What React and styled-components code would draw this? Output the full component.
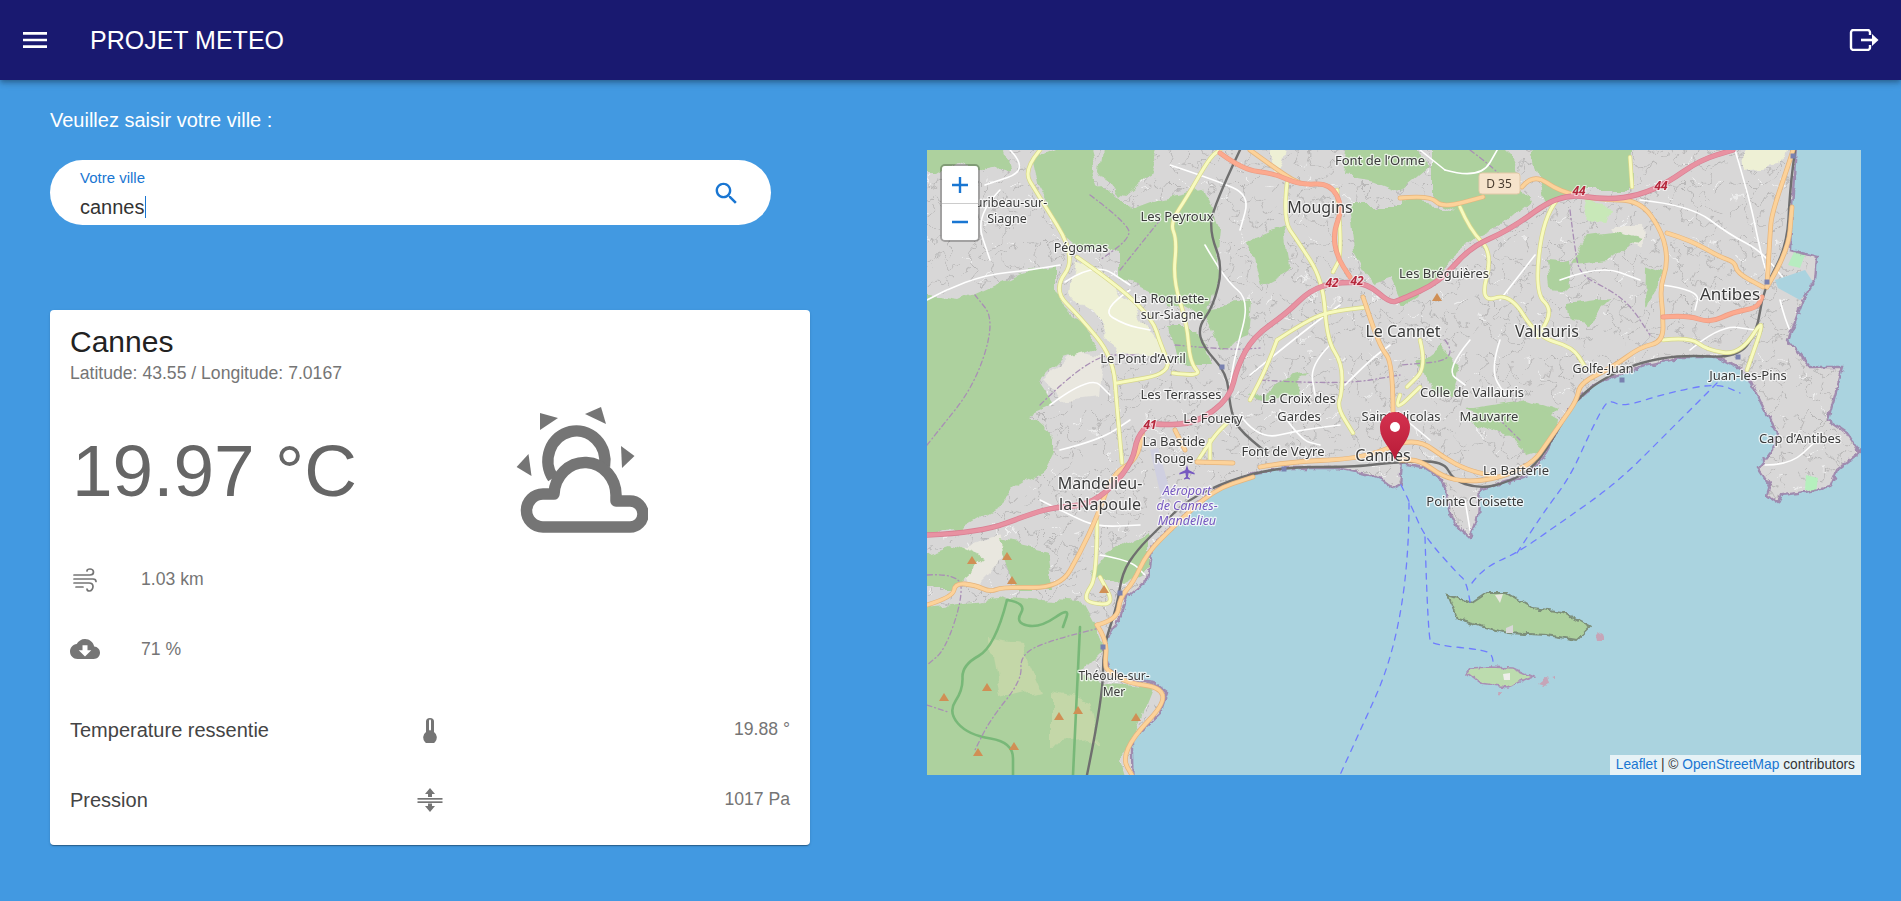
import React from 'react';
import styled, { createGlobalStyle } from 'styled-components';

const GlobalStyle = createGlobalStyle`
  html, body {
    margin: 0;
    padding: 0;
    background: #4299e1;
    font-family: "Liberation Sans", Arial, sans-serif;
    overflow: hidden;
  }
`;

const Page = styled.div`
  min-height: 901px;
  background: #4299e1;
`;

const Header = styled.header`
  height: 80px;
  background: #191970;
  color: #fff;
  display: flex;
  align-items: center;
  padding: 0 22px 0 19px;
  box-shadow: 0 2px 4px -1px rgba(0,0,0,.2), 0 4px 5px 0 rgba(0,0,0,.14), 0 1px 10px 0 rgba(0,0,0,.12);
`;

const Title = styled.h1`
  margin: 0 auto 0 39px;
  font-size: 25px;
  font-weight: 400;
`;

const Content = styled.main`
  display: flex;
  align-items: flex-start;
  padding-left: 50px;
`;

const LeftColumn = styled.section`
  width: 760px;
  flex: none;
`;

const Prompt = styled.p`
  margin: 25px 0 25px;
  color: #fff;
  font-size: 20px;
  line-height: 30px;
`;

const SearchBar = styled.div`
  width: 721px;
  height: 65px;
  box-sizing: border-box;
  background: #fff;
  border-radius: 33px;
  padding: 0 30px 0 30px;
  display: flex;
  align-items: center;
  justify-content: space-between;
`;

const Field = styled.div`
  display: flex;
  flex-direction: column;
  padding-top: 2px;
`;

const FieldLabel = styled.span`
  color: #1976d2;
  font-size: 15px;
  line-height: 18px;
  margin-bottom: 9px;
`;

const FieldValue = styled.span`
  align-self: flex-start;
  color: #333;
  font-size: 20px;
  line-height: 22px;
  border-right: 1px solid #1976d2;
`;

const Card = styled.article`
  margin-top: 85px;
  height: 535px;
  box-sizing: border-box;
  padding: 14px 20px 10px;
  background: #fff;
  border-radius: 4px;
  box-shadow: 0 2px 1px -1px rgba(0,0,0,.2), 0 1px 1px 0 rgba(0,0,0,.14), 0 1px 3px 0 rgba(0,0,0,.12);
`;

const CityName = styled.h2`
  margin: 0;
  color: #222;
  font-size: 30px;
  font-weight: 400;
  line-height: 36px;
`;

const Coords = styled.p`
  margin: 1px 0 20px;
  color: #757575;
  font-size: 17.6px;
  line-height: 24px;
`;

const TempRow = styled.div`
  height: 130px;
  display: grid;
  grid-template-columns: 446px 1fr;
  align-items: center;
  margin-bottom: 9px;
`;

const Temp = styled.span`
  color: #666;
  font-size: 73px;
  padding-left: 2px;
`;

const MiniRow = styled.div`
  height: 70px;
  display: flex;
  align-items: center;
`;

const MiniIcon = styled.div`
  width: 71px;
  display: flex;
  align-items: center;
`;

const SmallValue = styled.span`
  color: #757575;
  font-size: 17.6px;
`;

const Details = styled.div`
  margin-top: 11px;
`;

const DetailRow = styled.div`
  height: 70px;
  display: grid;
  grid-template-columns: 1fr 1fr 1fr;
  align-items: center;
`;

const DetailLabel = styled.span`
  color: #444;
  font-size: 20px;
`;

const DetailIcon = styled.div`
  display: flex;
  justify-content: center;
`;

const DetailValue = styled(SmallValue)`
  text-align: right;
  padding-bottom: 2px;
`;

const SearchGlyph = styled.svg`
  margin-top: 2px;
`;

const WindGlyph = styled.svg`
  margin-left: 3px;
`;

const MapBox = styled.div`
  position: relative;
  width: 934px;
  height: 625px;
  margin: 70px 0 0 117px;
  flex: none;
  overflow: hidden;
  background: #aad3df;
`;

const MapArt = styled.svg`
  display: block;
  filter: blur(0.45px);
`;

const ZoomControl = styled.div`
  position: absolute;
  top: 14px;
  left: 13px;
  width: 36px;
  border: 2px solid rgba(0,0,0,.25);
  border-radius: 5px;
  background-clip: padding-box;
  overflow: hidden;
`;

const ZoomButton = styled.div`
  height: 37px;
  box-sizing: border-box;
  display: flex;
  align-items: center;
  justify-content: center;
  background: #fff;
  & + & {
    border-top: 1px solid #ccc;
  }
`;

const Attribution = styled.div`
  position: absolute;
  right: 0;
  bottom: 0;
  height: 20px;
  padding: 0 6px 0 6px;
  background: rgba(255,255,255,.7);
  color: #333;
  font-size: 13.75px;
  line-height: 20px;
`;

const AttributionLink = styled.a`
  color: #1976d2;
`;

const MapLabel = styled.text`
  font-family: "Noto Sans", sans-serif;
  fill: ${(p) => (p.$air ? '#7658c0' : '#3a3a3a')};
  font-style: ${(p) => (p.$air ? 'italic' : 'normal')};
  text-anchor: middle;
  paint-order: stroke;
  stroke: rgba(255,255,255,.75);
  stroke-width: 2.4px;
  stroke-linejoin: round;
`;

const RoadNumber = styled.text`
  font-family: "Noto Sans", sans-serif;
  font-size: 12px;
  font-style: italic;
  font-weight: 700;
  fill: #b5283c;
  text-anchor: middle;
  paint-order: stroke;
  stroke: rgba(255,255,255,.6);
  stroke-width: 2px;
`;

const Shield = styled.text`
  font-family: "Noto Sans", sans-serif;
  font-size: 12px;
  fill: #4a3d30;
  text-anchor: middle;
`;

const forests = [
  '905,292 960,300 1020,273 1053,268 1053,290 1080,317 1097,347 1063,357 1037,383 1053,407 1030,417 1053,437 1053,453 1043,473 1020,487 1000,507 960,530 905,533',
  '1030,160 1087,135 1100,183 1127,207 1133,240 1113,250 1080,247 1060,230 1037,190',
  '905,135 1000,135 1010,165 985,170 960,160 935,175 905,175',
  '1120,215 1160,200 1205,190 1220,230 1215,280 1205,320 1150,290 1120,280',
  '1105,135 1160,135 1145,180 1120,200 1100,170',
  '1205,307 1250,300 1247,340 1220,350',
  '1170,330 1198,330 1210,365 1180,365',
  '1250,240 1285,225 1290,270 1262,285',
  '1350,135 1400,135 1430,165 1400,190 1375,180 1345,175',
  '1350,205 1420,205 1415,270 1375,285 1355,250',
  '1433,135 1500,135 1530,200 1500,227 1473,240 1457,207 1433,197',
  '1400,200 1460,207 1480,235 1450,260 1420,297 1400,303 1385,270 1400,240',
  '1530,135 1633,135 1630,190 1570,190 1545,205',
  '1547,260 1568,262 1570,287 1550,285',
  '1590,235 1613,232 1640,240 1612,262 1570,265',
  '1643,267 1665,275 1650,297 1642,310',
  '1567,303 1613,297 1587,323 1570,320',
  '1465,410 1530,400 1560,410 1530,440 1500,430',
  '1463,420 1500,433 1527,457 1540,453 1560,423 1530,405',
  '1250,400 1285,380 1310,375 1290,395',
  '1420,360 1440,345 1460,365 1450,395 1430,395',
  '905,610 1007,597 1080,603 1093,627 1100,653 1080,673 1110,683 1153,687 1133,737 1123,760 1133,795 905,795',
  '905,560 950,545 985,560 950,590 905,590',
  '1000,540 1045,550 1050,590 1020,590',
  '1130,540 1150,530 1150,570 1120,585 1085,575 1105,555',
];

const palePatches = [
  { fill: '#eef0d5', pts: '1075,260 1115,285 1160,340 1165,352 1120,355 1095,320 1070,290' },
  { fill: '#e9e7df', pts: '1043,380 1075,350 1105,355 1100,395 1060,400' },
  { fill: '#e9e7df', pts: '945,555 1000,535 1010,550 975,585 950,575' },
  { fill: '#e9e7df', pts: '1610,225 1640,225 1642,245 1618,250' },
  { fill: '#eef0d5', pts: '1740,135 1790,135 1780,165 1745,170' },
  { fill: '#eef0d5', pts: '1265,135 1290,135 1275,180' },
  { fill: '#c8e8b8', pts: '1590,200 1610,205 1605,220 1585,218' },
];

const parkPatches = [
  { fill: '#c4d7a8', pts: '990,640 1020,645 1040,690 1000,700' },
  { fill: '#c4d7a8', pts: '1050,690 1090,700 1100,740 1050,745' },
];

const shorePatches = [
  { fill: '#b7ecc0', pts: '1795,250 1805,255 1800,268 1788,265' },
  { fill: '#aad3df', pts: '1775,280 1805,270 1815,285 1800,300 1778,288' },
  { fill: '#b5f0bd', pts: '1806,475 1818,478 1816,492 1805,490' },
];

const parkLines = [
  '1007,600 995,647 962,665 963,690 948,712 968,735 1013,742 1013,775',
  '1007,600 1027,603 1015,623 1040,628 1070,607 1063,627',
  '1080,627 1073,775',
];

const adminLines = [
  '927,575 960,573 962,600 945,650 927,665',
  '1100,628 1050,640 1020,655 1022,680 990,720 975,750',
  '927,705 948,712',
  '927,445 935,435 975,385 995,320 975,295',
  '1040,405 1090,355 1135,355',
  '1175,345 1230,350 1260,348',
  '1260,380 1340,385 1400,375',
  '1470,150 1490,165 1505,180',
  '1570,210 1575,250 1580,275 1610,290 1630,305 1650,335',
  '1445,340 1460,360 1400,365',
  '1120,270 1160,220',
  '1090,195 1130,225 1128,240 1100,260',
  '1500,420 1520,440',
];

const streets = [
  '927,300 945,290 985,275 1030,270 1060,265',
  '1010,150 1030,170 985,185',
  '1065,282 1095,262 1130,285',
  '1130,290 1100,310 1125,325 1150,330',
  '1170,165 1215,180 1250,195 1240,230',
  '1205,245 1225,280 1250,300 1235,355 1230,385',
  '1250,375 1305,330 1340,305',
  '1345,385 1370,360 1390,345',
  '1240,415 1258,440 1300,430 1340,425',
  '1060,450 1100,440 1130,420',
  '1040,500 1070,515 1097,527 1140,525',
  '1100,555 1130,560 1145,575',
  '1640,200 1690,205 1730,235 1760,250 1785,280',
  '1735,150 1750,200 1760,250 1770,285',
  '1662,285 1700,290 1695,310',
  '1780,300 1790,340 1815,355',
  '1765,465 1790,465 1815,442',
  '1500,340 1490,370 1505,395',
  '1445,170 1480,180 1500,145',
  '1535,255 1500,300',
  '1420,150 1445,170',
  '1465,500 1470,530',
  '1400,415 1430,440',
  '1050,405 1090,375 1110,395',
  '1330,345 1310,365 1315,395',
  '1470,340 1445,370 1465,385',
  '1560,280 1600,265 1640,280',
  '1690,350 1720,325 1755,330',
  '1000,190 975,215 990,260',
  '1280,410 1300,440 1320,445',
];

const orangeRoads = [
  '1250,150 1287,177 1300,183',
  '1400,198 1430,195 1442,208 1483,197',
  '1522,187 1533,173 1560,192 1600,200 1640,200 1663,233 1668,263 1660,287 1663,313 1663,342 1640,347 1613,367 1580,383 1577,400 1563,420 1547,443 1533,463 1500,478 1467,482 1443,477 1420,460 1400,460',
  '1260,467 1287,462 1353,459 1385,450 1400,442 1423,442 1443,457 1467,470 1497,477',
  '1393,413 1393,363 1380,347 1363,297',
  '1667,233 1690,240 1720,257 1735,262 1737,273 1763,287',
  '1767,287 1770,233 1772,213 1790,160 1793,150',
  '1767,287 1788,253 1792,207',
  '927,605 953,597 955,583 975,585 990,592 1003,587 1060,588 1080,553 1097,517 1113,473 1137,460 1143,430',
  '1097,625 1117,620 1120,597 1133,583 1147,553 1173,527 1213,490 1253,477',
  '1097,625 1107,640 1105,665 1107,670 1127,683 1160,687 1165,703 1133,737 1123,760 1132,775',
  '1197,462 1233,463',
  '1175,430 1185,450',
];

const salmonRoads = [
  '1220,153 1243,170 1273,173 1300,185 1330,183 1343,207 1333,233 1337,257 1350,277',
  '1663,317 1687,315 1710,323 1733,312 1757,308 1762,297',
];

const motorway = [
  '927,535 980,533 1033,513 1057,507 1087,505 1113,487 1133,460 1137,437 1150,423 1163,425 1197,423 1230,398 1237,367 1253,337 1287,313 1310,290 1337,282 1367,283 1390,303 1400,300 1440,282 1470,247 1510,230 1560,193 1607,200 1640,195 1667,183 1700,160 1733,150',
];

const yellowRoads = [
  '1040,150 1023,170 1037,193 1077,257 1053,290 1080,317 1113,357 1117,407 1122,463',
  '1077,257 1120,287 1153,320 1160,343 1173,373 1117,383',
  '1173,373 1203,377 1190,363 1187,323 1173,280 1177,240 1170,223 1187,197 1210,157 1220,150',
  '1287,183 1283,220 1297,240 1323,280 1327,340 1342,363 1342,393 1337,407 1353,433',
  '1337,190 1343,253 1333,272',
  '1277,340 1267,367 1250,400',
  '1277,340 1303,323 1327,312 1367,307',
  '1460,207 1470,230 1493,253 1480,303 1510,293 1537,337 1573,347 1585,367',
  '1557,200 1543,217 1535,293 1553,310 1538,337',
  '1630,157 1632,187',
  '1663,340 1690,337 1707,350 1740,355 1767,313 1747,370',
  '1420,340 1427,367 1407,387',
  '1097,520 1097,577 1085,595 1088,603 1115,605 1100,577',
  '1210,440 1210,460',
  '1197,462 1213,437 1227,423',
  '1400,395 1393,413 1420,387',
];

const rails = [
  '1087,775 1103,697 1103,647 1117,607 1122,573 1137,550 1160,527 1187,500 1230,480 1280,467 1353,467 1387,463 1443,460 1453,480 1477,488 1500,485 1533,470 1560,427 1573,403 1600,380 1640,362 1683,355 1737,358 1757,333 1763,290 1787,247 1790,190 1795,150',
  '1240,150 1213,207 1210,233 1223,267 1213,307 1198,327 1203,347 1227,373 1230,407 1237,428 1267,453',
];

const ferries = [
  '1472,583 1483,568 1517,553 1553,528 1617,483 1667,433 1717,383',
  '1517,553 1543,513 1570,477 1588,437 1603,407 1610,400 1623,407 1667,393 1717,383 1740,393',
  '1470,602 1467,582 1457,573 1425,537 1413,510 1407,497 1400,483',
  '1425,537 1428,637 1433,645 1487,650 1493,657 1493,667',
  '1409,503 1409,623 1340,775',
];

const peaks = [
  [972, 560], [1007, 556], [1012, 580], [1104, 589], [987, 687], [944, 697],
  [1059, 716], [1078, 710], [1136, 717], [1014, 746], [978, 752], [1437, 297],
];

const stations = [[1120, 593], [1103, 647], [1284, 469], [1622, 380], [1738, 357], [1767, 282], [1793, 156], [1222, 367]];

const labels = [
  ['Font de l\u2019Orme', 1380, 165, 13],
  ['Auribeau-sur-', 1007, 207, 12.5],
  ['Siagne', 1007, 223, 12.5],
  ['Les Peyroux', 1177, 221, 13],
  ['Mougins', 1320, 213, 16],
  ['Pégomas', 1081, 252, 12.5],
  ['Les Bréguières', 1444, 278, 13],
  ['La Roquette-', 1171, 303, 12.5],
  ['sur-Siagne', 1172, 319, 12.5],
  ['Le Cannet', 1403, 337, 16],
  ['Vallauris', 1547, 337, 16],
  ['Antibes', 1730, 300, 17],
  ['Le Pont d\u2019Avril', 1143, 363, 13],
  ['Les Terrasses', 1181, 399, 13],
  ['La Croix des', 1299, 403, 13],
  ['Gardes', 1299, 421, 13],
  ['Le Fouery', 1213, 423, 13],
  ['Saint-Nicolas', 1401, 421, 13],
  ['Colle de Vallauris', 1472, 397, 13],
  ['Mauvarre', 1489, 421, 13],
  ['Golfe-Juan', 1603, 373, 12.5],
  ['Juan-les-Pins', 1748, 380, 13],
  ['Cap d\u2019Antibes', 1800, 443, 13],
  ['La Bastide', 1174, 446, 13],
  ['Rouge', 1174, 463, 13],
  ['Font de Veyre', 1283, 456, 13],
  ['Cannes', 1383, 461, 16],
  ['La Batterie', 1516, 475, 13],
  ['Pointe Croisette', 1475, 506, 13],
  ['Mandelieu-', 1100, 489, 16],
  ['la-Napoule', 1100, 510, 16],
  ['Théoule-sur-', 1114, 680, 12],
  ['Mer', 1114, 696, 12],
];

const airportLabels = [
  ['Aéroport', 1187, 495],
  ['de Cannes-', 1187, 510],
  ['Mandelieu', 1187, 525],
];

const roadNumbers = [
  ['42', 1332, 287], ['42', 1357, 285], ['41', 1150, 429], ['44', 1579, 195], ['44', 1661, 190],
];

const seaPath = 'M1133 800 L1132 752 1132 740 1160 713 1167 693 1153 683 1127 680 1110 670 1103 650 1110 633 1120 617 1127 597 1147 580 1150 560 1153 543 1173 527 1197 503 1220 487 1253 473 1287 468 1337 468 1370 475 1383 480 1393 488 1400 485 1402 463 1423 467 1443 480 1450 513 1457 527 1470 538 1478 517 1480 490 1503 483 1523 477 1540 463 1553 440 1563 420 1573 403 1597 383 1640 367 1683 357 1717 357 1747 373 1763 407 1777 433 1773 450 1758 468 1770 485 1767 495 1778 503 1782 495 1805 492 1830 487 1837 470 1860 452 1847 433 1828 420 1843 367 1810 367 1788 340 1803 300 1815 280 1817 257 1790 250 1792 207 1797 130 1885 130 1885 800 Z';

// rounds the corners of a road: each inner point becomes a curve control
const smooth = (pts) => {
  const p = pts.split(' ').map((s) => s.split(',').map(Number));
  let d = `M${p[0][0]} ${p[0][1]}`;
  for (let i = 1; i < p.length - 1; i += 1) {
    const mx = (p[i][0] + p[i + 1][0]) / 2;
    const my = (p[i][1] + p[i + 1][1]) / 2;
    d += ` Q${p[i][0]} ${p[i][1]} ${mx} ${my}`;
  }
  const last = p[p.length - 1];
  return `${d} L${last[0]} ${last[1]}`;
};

const Rough = ({ id, freq, scale, seed }) => (
  <filter id={id} filterUnits="userSpaceOnUse" x="900" y="125" width="990" height="680" colorInterpolationFilters="sRGB">
    <feTurbulence type="fractalNoise" baseFrequency={freq} numOctaves="3" seed={seed} />
    <feDisplacementMap in="SourceGraphic" scale={scale} xChannelSelector="R" yChannelSelector="G" />
  </filter>
);

// texture of small streets in the built-up areas
const Texture = () => (
  <pattern id="urban" width="64" height="58" patternUnits="userSpaceOnUse">
    <path
      d="M2 8 l10 6 6 -7 9 9 -5 9 11 5 7 -9 10 4 M14 14 l-4 14 9 7 -3 12 11 8 M27 16 l13 -8 8 -6 M35 34 l-4 13 12 6 9 -8 9 3 M45 26 l6 12 10 -5 M2 40 l9 -5 M52 45 l-3 12 M60 8 l-6 13"
      fill="none"
      stroke="#b9b8b8"
      strokeWidth="1"
    />
    <path d="M4 24 l8 4 M30 4 l6 8 M20 50 l9 -6 M50 12 l8 -2" fill="none" stroke="#f4f4f4" strokeWidth="0.9" />
  </pattern>
);

const Lines = ({ items, color, width, dash, opacity }) =>
  items.map((pts) => (
    <path
      key={pts}
      d={smooth(pts)}
      fill="none"
      stroke={color}
      strokeWidth={width}
      strokeDasharray={dash}
      strokeOpacity={opacity}
      strokeLinejoin="round"
      strokeLinecap="round"
    />
  ));

function OsmMap() {
  return (
    <MapArt width="934" height="625" viewBox="927 150 934 625">
      <defs>
        <Texture />
        <Rough id="areas" freq="0.035" scale="18" seed="4" />
        <Rough id="shore" freq="0.13" scale="6" seed="9" />
        <Rough id="tiny" freq="0.06" scale="22" seed="2" />
        <linearGradient id="pin" x1="0" y1="0" x2="0" y2="1">
          <stop offset="0" stopColor="#d4324f" />
          <stop offset="1" stopColor="#b81c38" />
        </linearGradient>
      </defs>
      <rect x="927" y="150" width="934" height="625" fill="#d8d7d7" />
      <rect x="900" y="125" width="990" height="680" fill="url(#urban)" filter="url(#tiny)" />
      <g filter="url(#areas)">
        {palePatches.map((p) => (
          <polygon key={p.pts} points={p.pts} fill={p.fill} />
        ))}
        {forests.map((pts) => (
          <polygon key={pts} points={pts} fill="#add19e" />
        ))}
        {parkPatches.map((p) => (
          <polygon key={p.pts} points={p.pts} fill={p.fill} />
        ))}
      </g>
      <polygon points="1150,450 1158,448 1172,498 1162,500" fill="#cfcfe0" />
      <polygon points="1213,490 1253,473 1258,476 1225,490" fill="#e6d9e2" />
      <Lines items={parkLines} color="#78b878" width={2.6} />
      <Lines items={adminLines} color="#a98fb5" width={1.3} dash="5 3 1 3" />
      <Lines items={streets} color="#ffffff" width={1.6} />
      {shorePatches.map((p) => (
        <polygon key={p.pts} points={p.pts} fill={p.fill} />
      ))}
      <g filter="url(#shore)">
        <path d={seaPath} fill="#aad3df" stroke="#9a7fa8" strokeWidth="2.4" strokeOpacity=".85" />
        <polygon points="1448,595 1458,620 1507,633 1547,635 1577,640 1590,627 1563,612 1533,608 1507,593 1487,593 1472,603" fill="#add19e" stroke="#7d8f7a" strokeWidth="2" />
        <polygon points="1467,673 1480,683 1507,687 1533,677 1513,668 1490,667 1470,668" fill="#bcdcae" stroke="#a98fb5" strokeWidth="1.6" />
        <polygon points="1596,631 1602,635 1604,641 1598,641" fill="#c6a5b8" />
        <polygon points="1538,684 1548,676 1550,684 1544,686" fill="#c6a5b8" />
        <polygon points="1552,677 1556,676 1556,679" fill="#c6a5b8" />
        <polygon points="1498,692 1502,692 1500,696" fill="#c6a5b8" />
      </g>
      <polygon points="1495,595 1503,594 1500,603" fill="#e9e7df" />
      <polygon points="1506,628 1513,625 1513,633 1506,633" fill="#d8d7d7" />
      <polygon points="1503,674 1510,673 1510,680 1504,680" fill="#eeeeea" />
      <Lines items={ferries} color="#6f7cff" width={1.3} dash="6 6" />
      <Lines items={rails} color="#6f6f6f" width={2.4} />
      <Lines items={yellowRoads} color="#d7d78a" width={4.4} />
      <Lines items={yellowRoads} color="#f7fabf" width={3} />
      <Lines items={orangeRoads} color="#e5b47c" width={4.8} />
      <Lines items={orangeRoads} color="#fcd29a" width={3.4} />
      <Lines items={salmonRoads} color="#ec9c84" width={5} />
      <Lines items={salmonRoads} color="#fcaa8f" width={3.6} />
      <Lines items={motorway} color="#d97f93" width={5.4} />
      <Lines items={motorway} color="#e892a2" width={4} />
      {peaks.map(([x, y]) => (
        <polygon key={`${x}-${y}`} points={`${x - 5},${y + 4} ${x},${y - 4} ${x + 5},${y + 4}`} fill="#d08f55" />
      ))}
      {stations.map(([x, y]) => (
        <rect key={`${x}-${y}`} x={x - 2.5} y={y - 2.5} width="5" height="5" fill="#7981b0" />
      ))}
      <path d="M1187 465 l1.6 5 6 3 v1.5 l-6 -1.5 -.6 4 2 1.6 v1 l-3 -.8 -3 .8 v-1 l2 -1.6 -.6 -4 -6 1.5 v-1.5 l6 -3 z" fill="#7658c0" />
      <rect x="1479" y="173" width="41" height="21" rx="3" fill="#f6e3cb" stroke="#e3c9a8" />
      <Shield x="1499" y="188">D 35</Shield>
      {roadNumbers.map(([t, x, y]) => (
        <RoadNumber key={`${t}-${x}`} x={x} y={y}>{t}</RoadNumber>
      ))}
      {labels.map(([t, x, y, size]) => (
        <MapLabel key={t} x={x} y={y} fontSize={size}>{t}</MapLabel>
      ))}
      {airportLabels.map(([t, x, y]) => (
        <MapLabel key={t} $air x={x} y={y} fontSize="12.5">{t}</MapLabel>
      ))}
      <path d="M1395 460 C1391 447 1380 441 1380 427 A15 15 0 0 1 1410 427 C1410 441 1399 447 1395 460 Z" fill="url(#pin)" />
      <circle cx="1395" cy="427" r="5" fill="#fff" />
    </MapArt>
  );
}

const MenuIcon = () => (
  <svg width="32" height="32" viewBox="0 0 24 24" fill="#fff">
    <path d="M3 18h18v-2H3v2zm0-5h18v-2H3v2zm0-7v2h18V6H3z" />
  </svg>
);

const LogoutIcon = () => (
  <svg width="30" height="22" viewBox="0 0 30 22" fill="none">
    <path d="M21 6V3.500A2.500 2.500 0 0 0 18.500 1H4.500A2.500 2.500 0 0 0 2 3.500v15A2.500 2.500 0 0 0 4.500 21h14a2.500 2.500 0 0 0 2.500-2.500V16" stroke="#fff" strokeWidth="2.400" />
    <path d="M12 11h12" stroke="#fff" strokeWidth="2.600" />
    <path d="M23 5l6.500 6-6.500 6z" fill="#fff" />
  </svg>
);

const SearchIcon = () => (
  <SearchGlyph width="29" height="29" viewBox="0 0 24 24" fill="#1976d2">
    <path d="M15.500 14h-.79l-.28-.27C15.410 12.590 16 11.110 16 9.500 16 5.910 13.090 3 9.500 3S3 5.910 3 9.500 5.910 16 9.500 16c1.610 0 3.090-.59 4.230-1.570l.27.28v.79l5 4.990L20.490 19l-4.990-5zm-6 0C7.010 14 5 11.990 5 9.500S7.010 5 9.500 5 14 7.010 14 9.500 11.990 14 9.500 14z" />
  </SearchGlyph>
);

const WeatherIcon = () => (
  <svg width="132" height="130" viewBox="516 405 132 130">
    <g fill="#757575">
      <polygon points="540,413 558,418 540,430" />
      <polygon points="601,407 585,414 606,424" />
      <polygon points="528.500,454 516.600,467 531.500,476" />
      <polygon points="621,446 634.500,456 622,468" />
    </g>
    <path d="M553 478 A28.500 30 0 1 1 604.500 466" fill="none" stroke="#757575" strokeWidth="11.500" />
    <path
      d="M543 527 H630 A13 13 0 0 0 630 501 H616 V497 A31 33 0 0 0 554 494 H543 A16.500 16.500 0 0 0 543 527 Z"
      fill="#fff"
      stroke="#757575"
      strokeWidth="11.500"
      strokeLinejoin="round"
    />
  </svg>
);

const WindIcon = () => (
  <WindGlyph width="24" height="25" viewBox="0 0 24 25" fill="none" stroke="#757575" strokeWidth="1.700" strokeLinecap="round">
    <path d="M1 8h16c2.500 0 3.500-1.500 3.500-3S19 2 17 2s-3 .8-3 2" />
    <path d="M1 12h19c2.500 0 3 1.500 3 2.500" />
    <path d="M1 16h15c3 0 4 1.500 4 3.500S18.500 24 16.500 24 14 23 14 22" />
    <path d="M3 20h7" />
  </WindGlyph>
);

const CloudDownloadIcon = () => (
  <svg width="30" height="30" viewBox="0 0 24 24" fill="#757575">
    <path d="M19.350 10.040C18.670 6.590 15.640 4 12 4 9.110 4 6.600 5.640 5.350 8.040 2.340 8.360 0 10.910 0 14c0 3.310 2.690 6 6 6h13c2.760 0 5-2.240 5-5 0-2.640-2.050-4.780-4.650-4.960zM17 13l-5 5-5-5h3V9h4v4h3z" />
  </svg>
);

const ThermometerIcon = () => (
  <svg width="14" height="25" viewBox="0 0 14 25">
    <path d="M3 14V3.500a4 3.500 0 0 1 8 0V14a6.800 6.800 0 1 1-8 0z" fill="#757575" />
    <rect x="6" y="1.500" width="2" height="11" rx="1" fill="#fff" />
  </svg>
);

const PressureIcon = () => (
  <svg width="26" height="24" viewBox="0 0 26 24" fill="#757575">
    <path d="M13 0l5 6H15v3h-4V6H8z" />
    <rect x="0.500" y="10" width="25" height="1.700" />
    <rect x="0.500" y="13.300" width="25" height="1.700" />
    <path d="M13 24l5-6H15v-2.500h-4V18H8z" />
  </svg>
);

const ZoomGlyph = ({ d }) => (
  <svg width="18" height="18" viewBox="0 0 18 18" stroke="#1976d2" strokeWidth="2.400">
    <path d={d} />
  </svg>
);

export default function App() {
  return (
    <Page>
      <GlobalStyle />
      <Header>
        <MenuIcon />
        <Title>PROJET METEO</Title>
        <LogoutIcon />
      </Header>
      <Content>
        <LeftColumn>
          <Prompt>Veuillez saisir votre ville :</Prompt>
          <SearchBar>
            <Field>
              <FieldLabel>Votre ville</FieldLabel>
              <FieldValue>cannes</FieldValue>
            </Field>
            <SearchIcon />
          </SearchBar>
          <Card>
            <CityName>Cannes</CityName>
            <Coords>Latitude: 43.55 / Longitude: 7.0167</Coords>
            <TempRow>
              <Temp>19.97 °C</Temp>
              <WeatherIcon />
            </TempRow>
            <MiniRow>
              <MiniIcon><WindIcon /></MiniIcon>
              <SmallValue>1.03 km</SmallValue>
            </MiniRow>
            <MiniRow>
              <MiniIcon><CloudDownloadIcon /></MiniIcon>
              <SmallValue>71 %</SmallValue>
            </MiniRow>
            <Details>
              <DetailRow>
                <DetailLabel>Temperature ressentie</DetailLabel>
                <DetailIcon><ThermometerIcon /></DetailIcon>
                <DetailValue>19.88 °</DetailValue>
              </DetailRow>
              <DetailRow>
                <DetailLabel>Pression</DetailLabel>
                <DetailIcon><PressureIcon /></DetailIcon>
                <DetailValue>1017 Pa</DetailValue>
              </DetailRow>
            </Details>
          </Card>
        </LeftColumn>
        <MapBox>
          <OsmMap />
          <ZoomControl>
            <ZoomButton><ZoomGlyph d="M1 9h16M9 1v16" /></ZoomButton>
            <ZoomButton><ZoomGlyph d="M1 9h16" /></ZoomButton>
          </ZoomControl>
          <Attribution>
            <AttributionLink>Leaflet</AttributionLink> | © <AttributionLink>OpenStreetMap</AttributionLink> contributors
          </Attribution>
        </MapBox>
      </Content>
    </Page>
  );
}
